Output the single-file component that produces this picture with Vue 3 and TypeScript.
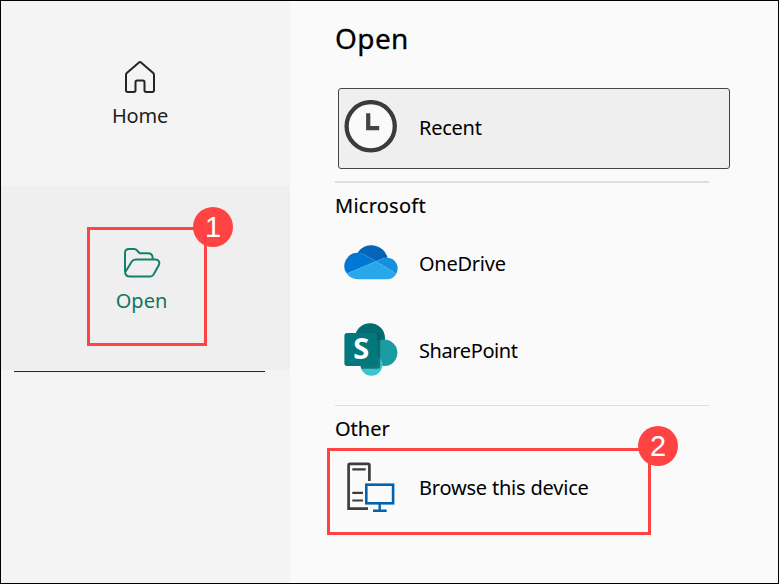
<script setup lang="ts">
interface Place {
  id: string
  label: string
}

const cloudPlaces: Place[] = [
  { id: 'onedrive', label: 'OneDrive' },
  { id: 'sharepoint', label: 'SharePoint' },
]
</script>

<template>
  <div class="window">
    <nav class="sidebar">
      <a class="nav-item home">
        <svg class="home-icon" width="32" height="34" viewBox="0 0 32 34">
          <path d="M15 2.4Q16 1.6 17 2.4L29.2 13Q30 13.8 30 15V30.3Q30 32 28.3 32H22.2Q20.5 32 20.5 30.3V22.4Q20.5 20.6 18.8 20.6H13.2Q11.5 20.6 11.5 22.4V30.3Q11.5 32 9.8 32H3.7Q2 32 2 30.3V15Q2 13.8 2.8 13Z" />
        </svg>
        <span class="home-label">Home</span>
      </a>
      <a class="nav-item open">
        <div class="callout callout-open">
          <svg class="folder-icon" width="38" height="32" viewBox="0 0 38 32">
            <path d="M2 24V6Q2 2 6 2H11.2Q12.8 2 13.9 3.2L16.6 6.2H25Q29.6 6.2 29.6 10.8V12.6M2 24Q2 29.6 7 29.6H27.2Q29.4 29.6 30.6 27.6L35.6 18.6Q37.2 15.4 35.2 13.6Q34.1 12.6 32.2 12.6H12.6Q10 12.6 8.6 14.8L2.7 24.5" />
          </svg>
          <span class="open-label">Open</span>
          <b class="badge"><i>1</i></b>
        </div>
      </a>
      <hr class="nav-rule" />
    </nav>

    <main class="content">
      <h1>Open</h1>
      <div class="row recent">
        <svg class="icon" width="54" height="54" viewBox="0 0 54 54">
          <circle cx="26.7" cy="26.2" r="24.1" fill="#fafafa" stroke="#3b3b39" stroke-width="4.3" />
          <path d="M24.2 13.2V28.2H35.2" fill="none" stroke="#444442" stroke-width="4.2" />
        </svg>
        <span class="recent-label">Recent</span>
      </div>
      <hr class="rule thick" />
      <h2 class="microsoft-label">Microsoft</h2>
      <div v-for="place in cloudPlaces" :key="place.id" class="row cloud">
        <svg v-if="place.id === 'onedrive'" class="icon" width="54" height="54" viewBox="-.2 0 32.4 32.4">
          <path fill="#0364b8" d="M12.2 11.19l6.72 4.02 4-1.68A6.48 6.48 0 0 1 25.5 13l.44.02A10 10 0 0 0 7.9 10H8a7.96 7.96 0 0 1 4.2 1.19Z" />
          <path fill="#0078d4" d="M12.2 11.19A7.96 7.96 0 0 0 8 10h-.1a8 8 0 0 0-6.46 12.57l5.92-2.49 2.63-1.11 5.87-2.47 3.06-1.29Z" />
          <path fill="#1490df" d="M25.94 13.02A6.48 6.48 0 0 0 22.92 13.53l-4 1.68 1.16.7 3.81 2.28 1.66.99 5.67 3.4a6.5 6.5 0 0 0-5.28-9.56Z" />
          <path fill="#28a8ea" d="M25.55 19.18l-1.66-.99-3.81-2.28-1.16-.7-3.06 1.29-5.87 2.47-2.63 1.11-5.92 2.49A7.99 7.99 0 0 0 8 26h17.5a6.5 6.5 0 0 0 5.72-3.42Z" />
        </svg>
        <svg v-else class="icon" width="54" height="54" viewBox="0 0 54 54">
          <circle cx="26" cy="15.2" r="15" fill="#036c70" />
          <circle cx="40.2" cy="29.8" r="13.2" fill="#1a9ba1" />
          <circle cx="27.4" cy="41.8" r="11" fill="#37c6d0" />
          <path d="M15 10.5H33.5Q36.2 10.5 36.2 13.2V43.3Q36.2 45.8 33.5 45.8H17.2Q15.8 42.5 17 39H15Z" fill="#08595d" opacity=".72" />
          <rect x=".4" y="10" width="33" height="33" rx="2.7" fill="#03787c" />
          <text x="17.2" y="36.3" class="tile-letter" text-anchor="middle">S</text>
        </svg>
        <span :class="place.id + '-label'">{{ place.label }}</span>
      </div>
      <hr class="rule" />
      <h2 class="other-label">Other</h2>
      <div class="row callout callout-browse">
        <svg class="icon" width="54" height="54" viewBox="0 0 54 54">
          <g fill="none" stroke="#3d3d3b" stroke-width="2.7">
            <path d="M24 48.6H4.6V5.2Q4.6 3.8 6 3.8H24Q25.4 3.8 25.4 5.2V21" />
            <path d="M8.3 9.4H21.7M8.3 32.8H19M8.3 40.5H19" stroke-width="2.2" />
          </g>
          <g fill="none" stroke="#0063b1" stroke-width="2.6">
            <rect x="22.3" y="24.7" width="26.8" height="18.6" />
            <path d="M35.7 43V50.5M29 50.8H42.7" stroke-width="2.4" />
          </g>
        </svg>
        <span class="browse-label">Browse this device</span>
        <b class="badge"><i>2</i></b>
      </div>
    </main>
  </div>
</template>

<style>
body {
  margin: 0;
}
</style>

<style scoped>
.window {
  box-sizing: border-box;
  display: flex;
  width: 779px;
  height: 584px;
  overflow: hidden;
  border: 1px solid #000;
  background: #fafafa;
  color: #000;
  font: 20px/24px "Noto Sans", "Open Sans", sans-serif;
}
span, h1, h2 {
  white-space: nowrap;
}
.sidebar {
  flex: none;
  width: 289px;
  background: #f4f4f4;
}
.nav-item {
  display: flex;
  flex-direction: column;
}
.home {
  box-sizing: border-box;
  height: 185px;
  padding: 59px 11px 0 0;
  align-items: center;
  color: #1f1f1f;
}
.home-icon {
  fill: none;
  stroke: #242424;
  stroke-width: 2;
}
.home-label {
  margin-top: 10px;
  letter-spacing: -0.2px;
}
.open {
  height: 184px;
  background: #efefef;
  color: #0f7562;
}
.callout {
  position: relative;
  box-sizing: border-box;
  border: 3px solid #ff4343;
}
.callout-open {
  display: flex;
  flex-direction: column;
  align-items: center;
  width: 120px;
  height: 119px;
  margin: 41px 0 0 86px;
  padding: 17px 11px 0 0;
}
.folder-icon {
  fill: none;
  stroke: #14806b;
  stroke-width: 2;
}
.open-label {
  margin-top: 10px;
}
.badge {
  position: absolute;
  top: -23px;
  right: -29px;
  display: flex;
  align-items: center;
  justify-content: center;
  width: 40px;
  height: 40px;
  border-radius: 50%;
  background: #ff4343;
  color: #fff;
  font: 29px/40px "Liberation Sans", sans-serif;
}
.badge i {
  font-style: normal;
}
.nav-rule {
  width: 251px;
  height: 1px;
  margin: 1px 0 0 13px;
  border: 0;
  background: #242424;
}
.content {
  flex: 1;
  padding: 19px 0 0 45px;
}
h1, h2 {
  margin: 0;
  font-weight: 400;
}
h1 {
  font-size: 28px;
  line-height: 36px;
  letter-spacing: 0.4px;
  -webkit-text-stroke: 0.3px #000;
}
h2 {
  font-size: 20px;
  line-height: 24px;
  -webkit-text-stroke: 0.15px #000;
}
.row {
  display: flex;
  align-items: center;
}
.row span {
  padding-top: 2px;
}
.icon {
  flex: none;
}
.recent {
  box-sizing: border-box;
  width: 392px;
  height: 81px;
  margin: 32px 0 0 3px;
  padding: 0 0 3px 5px;
  gap: 21px;
  border: 1px solid #444;
  border-radius: 3px;
  background: #efefef;
}
.recent-label {
  letter-spacing: -0.25px;
}
.onedrive-label {
  letter-spacing: -0.25px;
}
.sharepoint-label {
  letter-spacing: -0.4px;
}
.browse-label {
  letter-spacing: -0.2px;
}
.rule {
  width: 374px;
  height: 1px;
  margin: 20px 0 0;
  border: 0;
  background: #dedede;
}
.rule.thick {
  height: 2px;
  margin-top: 12px;
}
.microsoft-label {
  margin-top: 11px;
  letter-spacing: 0.25px;
}
.cloud {
  height: 70px;
  padding-left: 9px;
  gap: 21px;
}
.microsoft-label + .cloud {
  margin: 10px 0 17px;
}
.other-label {
  margin-top: 11px;
}
.callout-browse {
  width: 324px;
  height: 87px;
  margin: 7px 0 0 -8px;
  padding: 0 0 9px 14px;
  gap: 21px;
}
.callout-browse .badge {
  top: -25px;
  right: -30px;
}
.tile-letter {
  fill: #fff;
  font: 700 29px "Noto Sans", sans-serif;
}
</style>
